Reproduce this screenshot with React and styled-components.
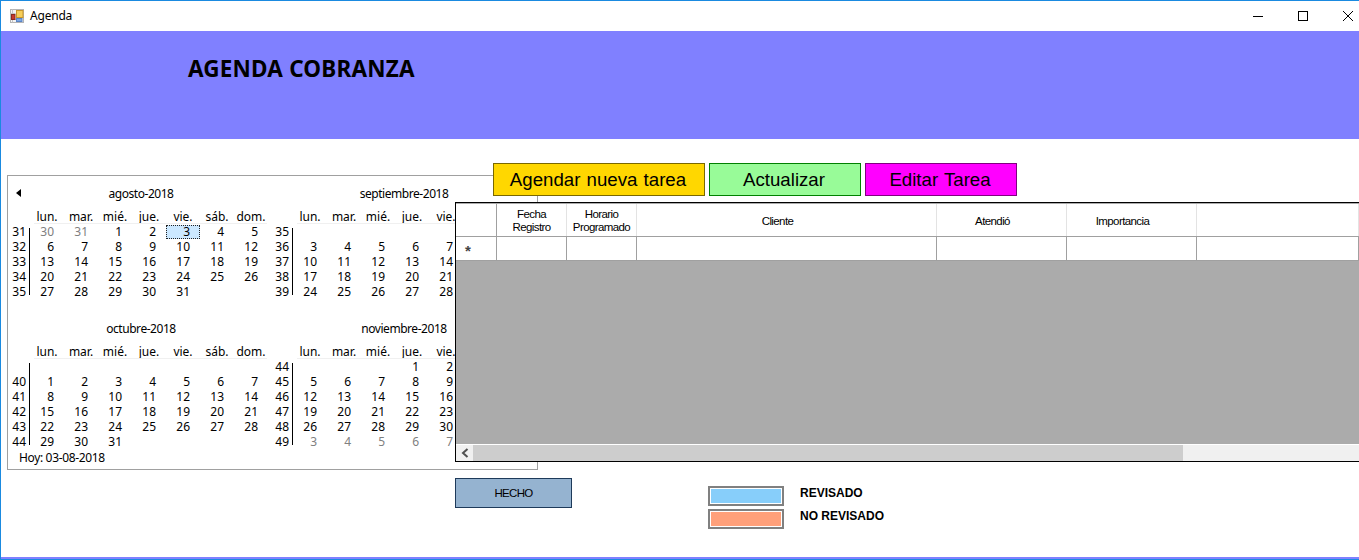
import React from "react";
import styled, { createGlobalStyle } from "styled-components";

const UI_FONT = '"Noto Sans", "Open Sans", sans-serif';
const FORM_FONT = '"Liberation Sans", Arial, sans-serif';

const GlobalStyle = createGlobalStyle`
  html, body { margin: 0; padding: 0; background: #fff; overflow: hidden; }
  * { box-sizing: border-box; }
`;

const Window = styled.div`
  position: relative;
  width: 1359px;
  height: 560px;
  display: flex;
  flex-direction: column;
  background: #fff;
  border-left: 1px solid #1a8ae0;
  border-top: 1px solid #1a8ae0;
  border-bottom: 1px solid #1a8ae0;
  overflow: hidden;
  font-family: ${UI_FONT};
  color: #000;
`;

const TitleBar = styled.div`
  flex: none;
  height: 30px;
  margin-right: -11px;
  display: flex;
  align-items: center;
  padding-left: 9px;
  font-size: 12px;
`;
const TitleText = styled.span`
  margin-left: 6px;
  padding-bottom: 2px;
  flex: 1;
  letter-spacing: -0.2px;
`;
const WinButton = styled.div`
  width: 45px;
  height: 30px;
  display: flex;
  align-items: center;
  justify-content: center;
`;

const Banner = styled.div`
  flex: none;
  height: 108px;
  background: #8080ff;
  padding: 23px 0 0 187px;
`;
const BannerTitle = styled.h1`
  margin: 0;
  font-size: 22.5px;
  line-height: 30px;
  font-weight: 700;
  letter-spacing: 0.2px;
`;

const Workspace = styled.div`
  position: relative;
  flex: 1;
  padding: 36px 0 0 6px;
`;
const BottomBand = styled.div`
  flex: none;
  height: 2px;
  background: #8080ff;
`;

const CalendarBox = styled.div`
  position: relative;
  width: 531px;
  height: 295px;
  border: 1px solid #a0a0a0;
  padding: 10px 0 0 0;
  overflow: hidden;
  font-size: 12px;
`;
const MonthGrid = styled.div`
  display: grid;
  grid-template-columns: 260px 260px;
  column-gap: 3px;
  row-gap: 7px;
`;
const Month = styled.div`
  width: 260px;
`;
const MonthTitle = styled.div`
  height: 16px;
  line-height: 16px;
  padding-left: 6px;
  text-align: center;
  white-space: nowrap;
  letter-spacing: -0.45px;
`;
const PrevArrow = styled.div`
  position: absolute;
  left: 8px;
  top: 13px;
  width: 0;
  height: 0;
  border-top: 4px solid transparent;
  border-bottom: 4px solid transparent;
  border-right: 5px solid #000;
`;
const Weekdays = styled.div`
  position: relative;
  margin: 6px 0 0 22px;
  height: 16px;
  width: 238px;
  display: grid;
  grid-template-columns: repeat(7, 34px);
  &::after {
    content: "";
    position: absolute;
    left: 4px;
    right: 1px;
    bottom: 0;
    height: 1px;
    background: #f0f0f0;
  }
`;
const Weekday = styled.div`
  line-height: 17px;
  text-align: center;
  white-space: nowrap;
`;
const Weeks = styled.div`
  display: flex;
`;
const WeekCol = styled.div`
  position: relative;
`;
const WeekNumbers = styled.div`
  width: 22px;
  padding-right: 4px;
  text-align: right;
`;
const WeekRule = styled.div`
  position: absolute;
  left: 21px;
  top: 4px;
  width: 1px;
  height: ${p => p.$h}px;
  background: #000;
`;
const Cell = styled.div`
  height: 15px;
  line-height: 15px;
  white-space: nowrap;
`;
const Days = styled.div`
  display: grid;
  grid-template-columns: repeat(7, 34px);
  grid-auto-rows: 15px;
`;
const Day = styled.div`
  height: ${p => (p.$selected ? "14px" : "15px")};
  margin-top: ${p => (p.$selected ? "1px" : "0")};
  line-height: ${p => (p.$selected ? "12px" : "15px")};
  padding-right: ${p => (p.$selected ? "9px" : "10px")};
  text-align: right;
  color: ${p => (p.$muted ? "#808080" : "#000")};
  background: ${p => (p.$selected ? "#cce8ff" : "transparent")};
  border: ${p => (p.$selected ? "1px dotted #222" : "none")};
`;
const Today = styled.div`
  position: absolute;
  left: 11px;
  bottom: 3px;
  height: 16px;
  line-height: 16px;
  letter-spacing: -0.35px;
`;

const Overlay = styled.div`
  position: absolute;
  left: 454px;
  top: 24px;
  right: 0;
`;
const ButtonRow = styled.div`
  display: flex;
  gap: 4px;
  padding-left: 38px;
  height: 33px;
`;
const ActionButton = styled.button`
  width: ${p => p.$w}px;
  height: 33px;
  padding: 0 2px 0 0;
  background: ${p => p.$bg};
  border: 1px solid ${p => p.$line};
  border-radius: 0;
  font-family: ${FORM_FONT};
  font-size: 18.67px;
  word-spacing: 1px;
  color: #000;
`;

const DataGrid = styled.div`
  margin-top: 6px;
  height: 260px;
  display: flex;
  flex-direction: column;
  background: #ababab;
  border-top: 1px solid #000;
  border-left: 1px solid #000;
  border-bottom: 1px solid #000;
  font-family: ${FORM_FONT};
  font-size: 11.5px;
`;
const GridRow = styled.div`
  flex: none;
  display: flex;
  height: ${p => p.$h}px;
  margin-top: ${p => p.$top || 0}px;
  background: #fff;
  border-bottom: 1px solid #a0a0a0;
`;
const HeaderCell = styled.div`
  flex: ${p => (p.$w ? `0 0 ${p.$w}px` : "1")};
  display: flex;
  align-items: center;
  justify-content: center;
  padding-right: ${p => p.$shift || 0}px;
  padding-top: ${p => (p.$shift ? 3 : 1)}px;
  text-align: center;
  line-height: 13px;
  letter-spacing: -0.6px;
  border-right: 1px solid ${p => (p.$first ? "#a0a0a0" : "#e3e3e3")};
`;
const DataCell = styled.div`
  flex: ${p => (p.$w ? `0 0 ${p.$w}px` : "1")};
  border-right: 1px solid #a0a0a0;
`;
const RowHeader = styled.div`
  flex: 0 0 41px;
  padding: 4px 0 0 9px;
  border-right: 1px solid #a0a0a0;
  font-size: 15px;
  font-weight: 700;
  line-height: 20px;
  color: #444;
`;
const GridFill = styled.div`
  flex: 1;
`;
const ScrollBar = styled.div`
  flex: none;
  height: 17px;
  display: flex;
  align-items: stretch;
  background: #f0f0f0;
  border-top: 1px solid #fff;
`;
const ScrollArrow = styled.div`
  flex: 0 0 17px;
  display: flex;
  align-items: center;
  justify-content: center;
`;
const ScrollThumb = styled.div`
  width: 710px;
  background: #cdcdcd;
`;

const FooterRow = styled.div`
  margin-top: 16px;
  display: flex;
  align-items: flex-start;
  font-family: ${FORM_FONT};
`;
const DoneButton = styled.button`
  width: 117px;
  height: 30px;
  padding: 0 0 1px 0;
  background: #95b3d0;
  border: 1px solid #1e3a5a;
  border-radius: 0;
  font-family: ${FORM_FONT};
  font-size: 11.5px;
  letter-spacing: -0.7px;
  color: #000;
`;
const Legend = styled.div`
  margin: 8px 0 0 136px;
  display: flex;
  flex-direction: column;
  gap: 3px;
`;
const LegendItem = styled.div`
  display: flex;
  align-items: flex-start;
  gap: 16px;
`;
const Swatch = styled.div`
  width: 76px;
  height: 20px;
  background: ${p => p.$color};
  border: 2px solid #808080;
  outline: 1px solid #fff;
  outline-offset: -3px;
`;
const LegendLabel = styled.span`
  font-size: 12px;
  font-weight: 700;
  line-height: 14px;
`;

const DAY_NAMES = ["lun.", "mar.", "mié.", "jue.", "vie.", "sáb.", "dom."];

const range = (from, to) => Array.from({ length: to - from + 1 }, (_, i) => from + i);
const blanks = n => Array(n).fill(null);

// The right-hand months only show five columns, the grid covers the others
const MONTHS = [
  {
    title: "agosto-2018",
    weeks: [31, 32, 33, 34, 35, ""],
    rule: 67,
    columns: 7,
    muted: [0, 1],
    selected: 4,
    days: [30, 31, ...range(1, 31)],
  },
  {
    title: "septiembre-2018",
    weeks: [35, 36, 37, 38, 39, ""],
    rule: 67,
    columns: 5,
    days: [...blanks(5), ...range(1, 30)],
  },
  {
    title: "octubre-2018",
    weeks: ["", 40, 41, 42, 43, 44],
    rule: 82,
    columns: 7,
    days: [...blanks(7), ...range(1, 31)],
  },
  {
    title: "noviembre-2018",
    weeks: [44, 45, 46, 47, 48, 49],
    rule: 82,
    columns: 5,
    muted: range(33, 41),
    days: [...blanks(3), ...range(1, 30), ...range(1, 9)],
  },
];

const COLUMNS = [
  { w: 70, label: ["Fecha", "Registro"] },
  { w: 70, label: ["Horario", "Programado"] },
  { w: 300, label: ["Cliente"], shift: 18 },
  { w: 130, label: ["Atendió"], shift: 18 },
  { w: 130, label: ["Importancia"], shift: 18 },
];

function CalendarMonth({ month }) {
  return (
    <Month>
      <MonthTitle>{month.title}</MonthTitle>
      <Weekdays>
        {DAY_NAMES.slice(0, month.columns).map(name => <Weekday key={name}>{name}</Weekday>)}
      </Weekdays>
      <Weeks>
        <WeekCol>
          <WeekNumbers>
            {month.weeks.map((week, i) => <Cell key={i}>{week}</Cell>)}
          </WeekNumbers>
          <WeekRule $h={month.rule} />
        </WeekCol>
        <Days>
          {month.days.map((day, i) => (
            <Day key={i} $muted={month.muted?.includes(i)} $selected={month.selected === i}>
              {i % 7 < month.columns ? day : null}
            </Day>
          ))}
        </Days>
      </Weeks>
    </Month>
  );
}

function AppIcon() {
  return (
    <svg width="14" height="14" viewBox="0 0 14 14">
      <rect x="0.5" y="0.5" width="13" height="13" fill="#f4f4f4" stroke="#b4b4b4" />
      <path d="M0.5 4.5h5M0.5 10.5h5M2.5 0.5v13" stroke="#c4c4c4" fill="none" />
      <rect x="6.5" y="1.5" width="6.5" height="7" fill="#f6ce5a" stroke="#c8962a" />
      <rect x="1.5" y="5.5" width="3.5" height="5" fill="#c8382c" stroke="#8a2a20" />
      <rect x="6.5" y="9.5" width="5.5" height="3" fill="#7ba6e4" stroke="#5a84c4" />
    </svg>
  );
}

export default function App() {
  return (
    <>
      <GlobalStyle />
      <Window>
        <TitleBar>
          <AppIcon />
          <TitleText>Agenda</TitleText>
          <WinButton>
            <svg width="10" height="10" viewBox="0 0 10 10"><path d="M0 5.5h10" stroke="#000" /></svg>
          </WinButton>
          <WinButton>
            <svg width="10" height="10" viewBox="0 0 10 10"><rect x="0.5" y="0.5" width="9" height="9" fill="none" stroke="#000" /></svg>
          </WinButton>
          <WinButton>
            <svg width="10" height="10" viewBox="0 0 10 10"><path d="M0 0l10 10M10 0L0 10" stroke="#000" /></svg>
          </WinButton>
        </TitleBar>

        <Banner>
          <BannerTitle>AGENDA COBRANZA</BannerTitle>
        </Banner>

        <Workspace>
          <CalendarBox>
            <PrevArrow />
            <MonthGrid>
              {MONTHS.map(month => <CalendarMonth key={month.title} month={month} />)}
            </MonthGrid>
            <Today>Hoy: 03-08-2018</Today>
          </CalendarBox>

          <Overlay>
            <ButtonRow>
              <ActionButton $w={212} $bg="#ffd700" $line="#7a6800">Agendar nueva tarea</ActionButton>
              <ActionButton $w={152} $bg="#98fb98" $line="#008000">Actualizar</ActionButton>
              <ActionButton $w={152} $bg="#ff00ff" $line="#800080">Editar Tarea</ActionButton>
            </ButtonRow>

            <DataGrid>
              <GridRow $h={33} $top={1}>
                <HeaderCell $w={41} $first />
                {COLUMNS.map(col => (
                  <HeaderCell key={col.label[0]} $w={col.w} $shift={col.shift}>
                    <span>
                      {col.label[0]}
                      {col.label[1] && <br />}
                      {col.label[1]}
                    </span>
                  </HeaderCell>
                ))}
                <HeaderCell />
              </GridRow>
              <GridRow $h={24}>
                <RowHeader>*</RowHeader>
                {COLUMNS.map(col => <DataCell key={col.label[0]} $w={col.w} />)}
                <DataCell />
              </GridRow>
              <GridFill />
              <ScrollBar>
                <ScrollArrow>
                  <svg width="8" height="10" viewBox="0 0 8 10"><path d="M6.5 1L2 5l4.5 4" fill="none" stroke="#505050" strokeWidth="2" /></svg>
                </ScrollArrow>
                <ScrollThumb />
              </ScrollBar>
            </DataGrid>

            <FooterRow>
              <DoneButton>HECHO</DoneButton>
              <Legend>
                <LegendItem>
                  <Swatch $color="#87cefa" />
                  <LegendLabel>REVISADO</LegendLabel>
                </LegendItem>
                <LegendItem>
                  <Swatch $color="#ffa07a" />
                  <LegendLabel>NO REVISADO</LegendLabel>
                </LegendItem>
              </Legend>
            </FooterRow>
          </Overlay>
        </Workspace>
        <BottomBand />
      </Window>
    </>
  );
}
